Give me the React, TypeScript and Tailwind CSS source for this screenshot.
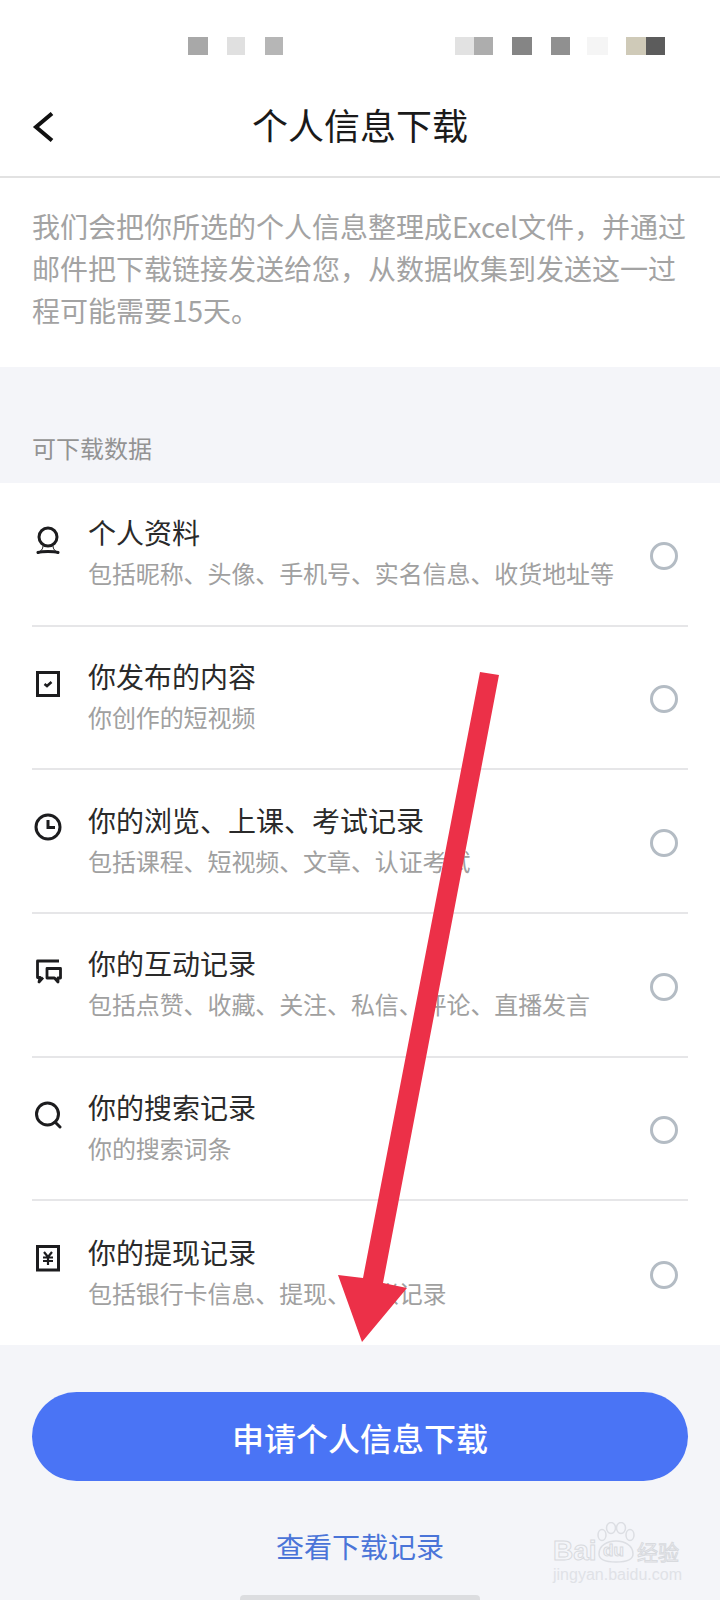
const FONT = "font-['Noto_Sans_CJK_SC','Noto_Sans',sans-serif]";

function PersonIcon() {
  return (
    <svg width="28" height="28" viewBox="0 0 28 28" fill="none" stroke="#1c1c1e" strokeWidth="3">
      <circle cx="14" cy="11" r="9" />
      <path d="M9 20c0 3-2 5.500-5 6h20c-3-.500-5-3-5-6" strokeWidth="1" />
      <path d="M4 26.500c4-1.500 16-1.500 20 0" strokeLinecap="round" />
    </svg>
  );
}

function CheckIcon() {
  return (
    <svg width="28" height="28" viewBox="0 0 28 28" fill="none" stroke="#1c1c1e">
      <rect x="3.500" y="2.500" width="21" height="23" strokeWidth="3" />
      <path d="M10.500 14l2.500 2 4.500-4" strokeWidth="2.500" />
    </svg>
  );
}

function ClockIcon() {
  return (
    <svg width="28" height="28" viewBox="0 0 28 28" fill="none" stroke="#1c1c1e" strokeWidth="3">
      <circle cx="14" cy="14" r="12" />
      <path d="M14 7v7.500h7" />
    </svg>
  );
}

function ChatIcon() {
  return (
    <svg width="28" height="28" viewBox="0 0 28 28" fill="none" stroke="#1c1c1e" strokeWidth="2.800">
      <path d="M25 4H3.500v16.500h2.500l-1 4.500 4-4.500" strokeLinejoin="round" />
      <path d="M13 11.500h13.500v9.500h-2.500v4l-3.500-4H13z" strokeLinejoin="round" />
    </svg>
  );
}

function SearchIcon() {
  return (
    <svg width="28" height="28" viewBox="0 0 28 28" fill="none" stroke="#1c1c1e" strokeWidth="3">
      <circle cx="13.500" cy="13" r="11" />
      <path d="M21 21l5 5" strokeLinecap="round" />
    </svg>
  );
}

function YuanIcon() {
  return (
    <svg width="28" height="28" viewBox="0 0 28 28" fill="none" stroke="#1c1c1e">
      <rect x="3.500" y="2.500" width="21" height="23.500" strokeWidth="3" />
      <path d="M10 8l4 5 4-5M9 13.500h10M9 17h10M14 13v8" strokeWidth="2.200" />
    </svg>
  );
}

const rows = [
  { icon: <PersonIcon />, title: "个人资料", sub: "包括昵称、头像、手机号、实名信息、收货地址等" },
  { icon: <CheckIcon />, title: "你发布的内容", sub: "你创作的短视频" },
  { icon: <ClockIcon />, title: "你的浏览、上课、考试记录", sub: "包括课程、短视频、文章、认证考试" },
  { icon: <ChatIcon />, title: "你的互动记录", sub: "包括点赞、收藏、关注、私信、评论、直播发言" },
  { icon: <SearchIcon />, title: "你的搜索记录", sub: "你的搜索词条" },
  { icon: <YuanIcon />, title: "你的提现记录", sub: "包括银行卡信息、提现、到账记录" },
];

function StatusBar() {
  return (
    <div className="flex h-[55px] pt-[37px]">
      <div className="ml-[188px] flex">
        <div className="w-5 bg-[#a8a8a8]" />
        <div className="ml-[19px] w-[18px] bg-[#e0e0e0]" />
        <div className="ml-[20px] w-[18px] bg-[#b6b6b6]" />
      </div>
      <div className="ml-[172px] flex">
        <div className="w-[19px] bg-[#e2e2e2]" />
        <div className="w-[19px] bg-[#adadad]" />
        <div className="ml-[19px] w-5 bg-[#858585]" />
        <div className="ml-[19px] w-[19px] bg-[#909090]" />
        <div className="ml-[17px] w-[21px] bg-[#f5f5f5]" />
        <div className="ml-[18px] w-5 bg-[#cfcab8]" />
        <div className="w-[19px] bg-[#5c5c5c]" />
      </div>
    </div>
  );
}

export default function App() {
  return (
    <div className={`relative h-[1600px] w-[720px] overflow-hidden bg-[#f4f5f9] ${FONT}`}>
      <div className="bg-white">
        <StatusBar />
        <div className="relative flex h-[123px] items-center justify-center border-b-2 border-[#e2e2e2] pt-[16px]">
          <svg className="absolute left-[30px] top-[57px]" width="26" height="30" viewBox="0 0 26 30" fill="none" stroke="#111" strokeWidth="4">
            <path d="M22 1.500L6 15l16 13.500" />
          </svg>
          <h1 className="text-[36px] font-normal leading-[48px] text-[#1a1a1a]">个人信息下载</h1>
        </div>
        <p className="h-[189px] px-8 pt-[27px] text-[28px] leading-[42px] text-[#a3a3a3]">
          我们会把你所选的个人信息整理成Excel文件，并通过邮件把下载链接发送给您，从数据收集到发送这一过程可能需要15天。
        </p>
      </div>

      <div className="flex h-[116px] items-end px-8 pb-[19px] text-[24px] leading-[32px] text-[#939393]">可下载数据</div>

      <div className="grid h-[862px] grid-rows-6 bg-white px-8">
        {rows.map((row, i) => (
          <div key={row.title} className={`flex items-center ${i < 5 ? "border-b-2 border-[#e6e6e8]" : ""}`}>
            <div className="mt-[43px] w-[56px] self-start pl-[2px]">{row.icon}</div>
            <div className="mb-[3px] flex-1">
              <div className="text-[28px] leading-[42px] text-[#2a2a2a]">{row.title}</div>
              <div className="text-[24px] leading-[40px] tracking-[-0.1px] text-[#a0a0a0]">{row.sub}</div>
            </div>
            <div className="mr-[10px] mt-[4px] h-7 w-7 rounded-full border-[3px] border-[#b4bcc4]" />
          </div>
        ))}
      </div>

      <div className="px-8 pt-[47px]">
        <button className="h-[89px] w-full rounded-full bg-[#4a74f5] text-[32px] font-medium text-white">申请个人信息下载</button>
        <div className="mt-[45px] text-center text-[28px] leading-[40px] text-[#4a74d8]">查看下载记录</div>
      </div>

      <div className="absolute bottom-0 left-[240px] h-[5px] w-[240px] rounded-t bg-[#dcdde0]" />

      {/* red annotation arrow on top of the screenshot */}
      <svg className="absolute left-0 top-0" width="720" height="1600" viewBox="0 0 720 1600">
        <polygon points="480,672 499,675 383,1283 407,1288 362,1342 338,1275 363,1278" fill="#ec3048" />
      </svg>

      {/* watermark */}
      <div className="absolute left-[553px] top-[1522px] w-[130px]">
        <svg className="absolute left-[43px] top-0" width="40" height="42" viewBox="0 0 40 42" fill="none" stroke="#dcdee3" strokeWidth="1.500">
          <ellipse cx="6" cy="13" rx="4" ry="5.500" />
          <ellipse cx="15" cy="6" rx="4.500" ry="5.500" />
          <ellipse cx="25" cy="6" rx="4.500" ry="5.500" />
          <ellipse cx="34" cy="13" rx="4" ry="5.500" />
          <path d="M3 32c0-9 9-13 17-13s17 4 17 13c0 6-7 8-17 8S3 38 3 32z" />
        </svg>
        <div className="relative mt-[15px] flex h-[28px] items-center font-['Liberation_Sans',sans-serif] text-[28px] font-bold leading-[28px] text-transparent [-webkit-text-stroke:1px_#d8dade]">
          <span className="w-[50px]">Bai</span>
          <span className="w-[34px] text-[17px]">du</span>
          <span className={`text-[21px] font-normal ${FONT}`}>经验</span>
        </div>
        <div className="font-['Liberation_Sans',sans-serif] text-[16px] leading-[20px] text-[#e0e2e7]">jingyan.baidu.com</div>
      </div>
    </div>
  );
}
